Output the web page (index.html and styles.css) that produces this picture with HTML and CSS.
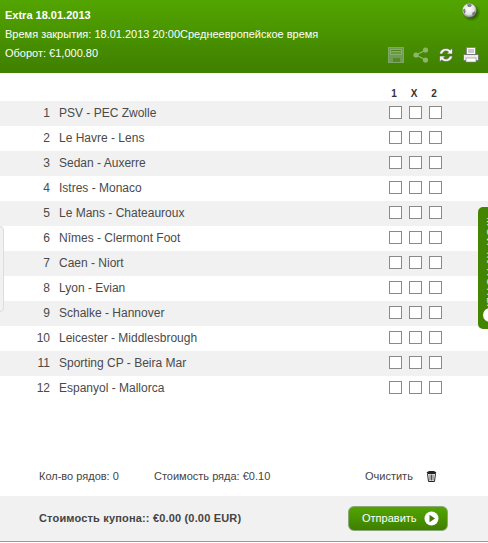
FILE: index.html
```html
<!DOCTYPE html>
<html lang="ru">
<head>
<meta charset="utf-8">
<title>Extra 18.01.2013</title>
<link rel="stylesheet" href="styles.css">
</head>
<body>
<div class="page">
  <header class="header">
    <div class="title">Extra 18.01.2013</div>
    <div class="line">Время закрытия: 18.01.2013 20:00Среднеевропейское время</div>
    <div class="line">Оборот: €1,000.80</div>
    <svg class="ball" width="20" height="20" viewBox="0 0 20 20">
      <defs>
        <radialGradient id="ballShade" cx="45%" cy="40%" r="60%">
          <stop offset="0" stop-color="#ffffff"/>
          <stop offset=".65" stop-color="#e2e2e2"/>
          <stop offset="1" stop-color="#777777"/>
        </radialGradient>
        <radialGradient id="ballShadow" cx="50%" cy="50%" r="50%">
          <stop offset=".55" stop-color="#1f4400" stop-opacity=".7"/>
          <stop offset="1" stop-color="#1f4400" stop-opacity="0"/>
        </radialGradient>
      </defs>
      <circle cx="10.500" cy="10.500" r="9" fill="url(#ballShadow)"/>
      <circle cx="8.500" cy="8.500" r="7" fill="url(#ballShade)"/>
      <path d="M6 2.500l3-.7 2 1.200-1.500 2-2.500 0zM1.800 8l2-1.500 1 3-1.300 2.500zM11 11l3-1.800 .3 1.800-2.300 3z" fill="#666" opacity=".8"/>
    </svg>
    <div class="tools">
      <svg class="tool" width="16" height="16" viewBox="0 0 16 16">
        <rect x="0.500" y="0.500" width="15" height="15" fill="#6f9c52" stroke="#7fa864"/>
        <rect x="2" y="2" width="12" height="6" fill="#86ae6c"/>
        <path d="M3 3.500h10M3 6h10" stroke="#4f8420"/>
        <rect x="5" y="11" width="7" height="4" fill="#54882a"/>
      </svg>
      <svg class="tool" width="16" height="16" viewBox="0 0 16 16">
        <path d="M13 3L3 8l10 5" fill="none" stroke="#8db56c" stroke-width="1.300"/>
        <circle cx="12.500" cy="3" r="2.600" fill="#8db56c"/>
        <circle cx="3" cy="8" r="2.600" fill="#8db56c"/>
        <circle cx="12.500" cy="13" r="2.600" fill="#8db56c"/>
      </svg>
      <svg class="tool" width="16" height="16" viewBox="0 0 16 16">
        <path d="M1.500 7C2 3 5 1.500 8 1.500c2 0 3.300 .7 4.300 1.500L14.500 1V7H8.500l2-2C9.500 4.300 9 4 8 4 6 4 5 5 4.500 7z" fill="#f4f4f4" stroke="#4a5a36" stroke-width=".6"/>
        <path d="M14.500 9c-.5 4-3.500 5.500-6.500 5.500-2 0-3.300-.7-4.300-1.500L1.500 15V9h6l-2 2c1 .7 1.500 1 2.500 1 2 0 3-1 3.500-3z" fill="#f4f4f4" stroke="#4a5a36" stroke-width=".6"/>
      </svg>
      <svg class="tool" width="16" height="16" viewBox="0 0 16 16">
        <rect x="3.500" y="0.500" width="9" height="7" fill="#fafafa" stroke="#8a8a8a"/>
        <path d="M5 3h6M5 5h6" stroke="#999"/>
        <rect x="0.500" y="7.500" width="15" height="6" rx="1" fill="#ececec" stroke="#777"/>
        <rect x="3" y="11" width="10" height="4" fill="#fff" stroke="#888" stroke-width=".6"/>
      </svg>
    </div>
  </header>

  <div class="marks"><span class="mark">1</span><span class="mark">X</span><span class="mark">2</span></div>

  <div class="rows">
    <div class="row"><span class="num">1</span><span class="match">PSV - PEC Zwolle</span><span class="boxes"><i class="box"></i><i class="box"></i><i class="box"></i></span></div>
    <div class="row"><span class="num">2</span><span class="match">Le Havre - Lens</span><span class="boxes"><i class="box"></i><i class="box"></i><i class="box"></i></span></div>
    <div class="row"><span class="num">3</span><span class="match">Sedan - Auxerre</span><span class="boxes"><i class="box"></i><i class="box"></i><i class="box"></i></span></div>
    <div class="row"><span class="num">4</span><span class="match">Istres - Monaco</span><span class="boxes"><i class="box"></i><i class="box"></i><i class="box"></i></span></div>
    <div class="row"><span class="num">5</span><span class="match">Le Mans - Chateauroux</span><span class="boxes"><i class="box"></i><i class="box"></i><i class="box"></i></span></div>
    <div class="row"><span class="num">6</span><span class="match">Nîmes - Clermont Foot</span><span class="boxes"><i class="box"></i><i class="box"></i><i class="box"></i></span></div>
    <div class="row"><span class="num">7</span><span class="match">Caen - Niort</span><span class="boxes"><i class="box"></i><i class="box"></i><i class="box"></i></span></div>
    <div class="row"><span class="num">8</span><span class="match">Lyon - Evian</span><span class="boxes"><i class="box"></i><i class="box"></i><i class="box"></i></span></div>
    <div class="row"><span class="num">9</span><span class="match">Schalke - Hannover</span><span class="boxes"><i class="box"></i><i class="box"></i><i class="box"></i></span></div>
    <div class="row"><span class="num">10</span><span class="match">Leicester - Middlesbrough</span><span class="boxes"><i class="box"></i><i class="box"></i><i class="box"></i></span></div>
    <div class="row"><span class="num">11</span><span class="match">Sporting CP - Beira Mar</span><span class="boxes"><i class="box"></i><i class="box"></i><i class="box"></i></span></div>
    <div class="row"><span class="num">12</span><span class="match">Espanyol - Mallorca</span><span class="boxes"><i class="box"></i><i class="box"></i><i class="box"></i></span></div>
  </div>

  <div class="summary">
    <span class="count">Кол-во рядов: 0</span>
    <span class="price">Стоимость ряда: €0.10</span>
    <span class="clear">Очистить</span>
    <svg class="trash" width="11" height="12" viewBox="0 0 11 12">
      <path d="M0.500 2.500L3 1h5l2.500 1.500-1 .8h-8z" fill="#222"/>
      <path d="M1.500 3.500h8L8.500 11.500h-6z" fill="#fff" stroke="#222"/>
      <path d="M4 4.500v6M5.500 4.500v6M7 4.500v6" stroke="#222" stroke-width=".8"/>
    </svg>
  </div>

  <footer class="footer">
    <span class="total">Стоимость купона:: €0.00 (0.00 EUR)</span>
    <button class="send" type="button">Отправить
      <svg class="play" width="15" height="15" viewBox="0 0 15 15">
        <circle cx="7.500" cy="7.500" r="7" fill="#fff"/>
        <path d="M5.500 3.800l5.500 3.700-5.500 3.700z" fill="#3f7a00"/>
      </svg>
    </button>
  </footer>

  <div class="side-left"></div>
  <div class="side-right"><span class="side-text">МОИ КУПОНЫ</span><i class="side-dot"></i></div>
</div>
</body>
</html>
```
FILE: styles.css
```css
html, body { margin: 0; padding: 0; background: #fff; }
body { font-family: "Liberation Sans", Arial, sans-serif; overflow: hidden; }
.page { position: relative; width: 488px; height: 543px; overflow: hidden; }

.header {
  position: relative; box-sizing: border-box; height: 73px; padding: 6px 0 0 5px;
  background: linear-gradient(#52a500, #3f7f00); color: #fff; font-size: 11px; line-height: 19px;
}
.title { font-weight: bold; }
.ball { position: absolute; top: 2px; right: 7px; }
.tools { position: absolute; top: 47px; right: 9px; display: flex; gap: 9px; }
.tool { display: block; }

.marks { display: flex; gap: 6px; justify-content: flex-end; height: 28px; padding: 14px 47px 0 0; box-sizing: border-box; }
.mark { width: 14px; text-align: center; font-size: 10px; font-weight: bold; line-height: 14px; color: #333; }

.row { display: flex; align-items: center; box-sizing: border-box; height: 25px; padding-bottom: 2px; color: #4a4a4a; font-size: 12px; }
.row:nth-child(odd) { background: #f1f1f1; }
.num { width: 50px; text-align: right; }
.match { margin-left: 9px; flex: 1; }
.boxes { display: flex; gap: 7px; padding-right: 46px; }
.box { display: block; box-sizing: border-box; width: 13px; height: 13px; background: #fff; border: 1px solid #8a8a8a; }

.summary { display: flex; align-items: center; height: 20px; margin-top: 65px; font-size: 11px; color: #444; }
.count { margin-left: 39px; width: 115px; }
.price { width: 211px; }
.clear { width: 61px; }
.trash { display: block; }

.footer {
  display: flex; align-items: center; justify-content: space-between; box-sizing: border-box;
  height: 46px; margin-top: 10px; padding: 0 40px 1px 39px; background: #f1f1f1; border-bottom: 1px solid #999;
}
.total { font-size: 11px; font-weight: bold; color: #444; letter-spacing: .17px; }
.send {
  display: flex; align-items: center; gap: 7px; box-sizing: border-box; width: 100px; height: 25px; padding: 0 0 0 13px;
  border: 1px solid #8aa878; border-radius: 6px; background: linear-gradient(#52a500, #3f7f00);
  color: #fff; font: 11px "Liberation Sans", Arial, sans-serif;
}
.play { display: block; }

.side-left { position: absolute; left: -6px; top: 226px; width: 8px; height: 84px; background: #f1f1f1; border: 1px solid #ddd; border-radius: 4px; }
.side-right { position: absolute; left: 478px; top: 207px; width: 20px; height: 122px; background: #438500; border-radius: 5px; overflow: hidden; }
.side-text { position: absolute; top: 10px; left: 7px; writing-mode: vertical-rl; color: #e8f0df; font-size: 11px; line-height: 12px; letter-spacing: 1.5px; }
.side-dot { position: absolute; left: 5px; top: 101px; width: 14px; height: 14px; border-radius: 50%; background: #fff; }
```
